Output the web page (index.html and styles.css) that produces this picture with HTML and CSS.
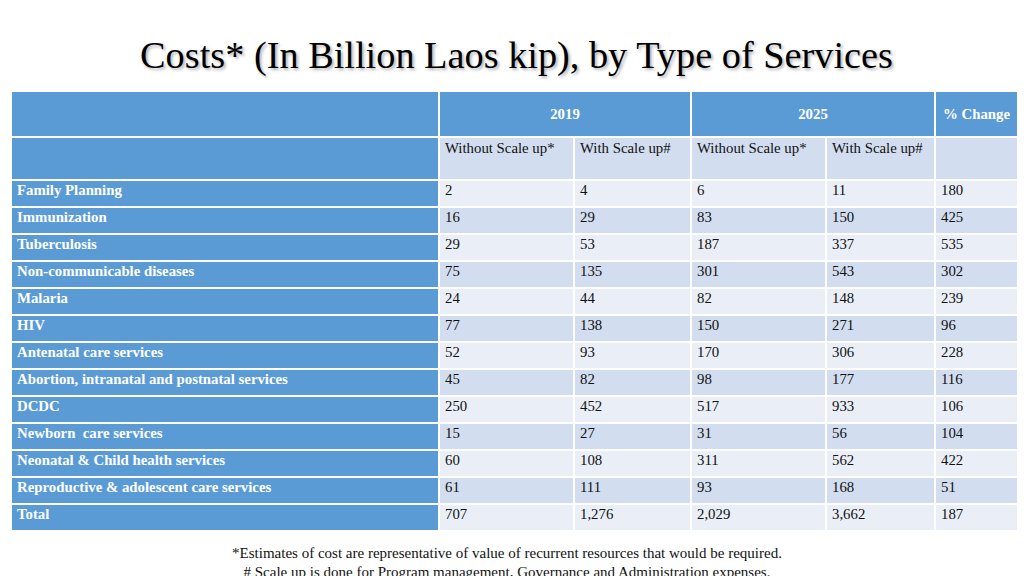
FILE: index.html
```html
<!DOCTYPE html>
<html>
<head>
<meta charset="utf-8">
<link rel="stylesheet" href="styles.css">
</head>
<body>
<div class="slide">
  <h1 class="title">Costs* (In Billion Laos kip), by Type of Services</h1>
  <table class="costs">
    <colgroup>
      <col class="c-label"><col class="c-a"><col class="c-b"><col class="c-c"><col class="c-d"><col class="c-e">
    </colgroup>
    <tr class="head">
      <th></th>
      <th colspan="2">2019</th>
      <th colspan="2">2025</th>
      <th>% Change</th>
    </tr>
    <tr class="sub">
      <th class="lab"></th>
      <td>Without Scale up*</td>
      <td>With Scale up#</td>
      <td>Without Scale up*</td>
      <td>With Scale up#</td>
      <td></td>
    </tr>
    <tr class="odd"><th class="lab">Family Planning</th><td>2</td><td>4</td><td>6</td><td>11</td><td>180</td></tr>
    <tr class="even"><th class="lab">Immunization</th><td>16</td><td>29</td><td>83</td><td>150</td><td>425</td></tr>
    <tr class="odd"><th class="lab">Tuberculosis</th><td>29</td><td>53</td><td>187</td><td>337</td><td>535</td></tr>
    <tr class="even"><th class="lab">Non-communicable diseases</th><td>75</td><td>135</td><td>301</td><td>543</td><td>302</td></tr>
    <tr class="odd"><th class="lab">Malaria</th><td>24</td><td>44</td><td>82</td><td>148</td><td>239</td></tr>
    <tr class="even"><th class="lab">HIV</th><td>77</td><td>138</td><td>150</td><td>271</td><td>96</td></tr>
    <tr class="odd"><th class="lab">Antenatal care services</th><td>52</td><td>93</td><td>170</td><td>306</td><td>228</td></tr>
    <tr class="even"><th class="lab">Abortion, intranatal and postnatal services</th><td>45</td><td>82</td><td>98</td><td>177</td><td>116</td></tr>
    <tr class="odd"><th class="lab">DCDC</th><td>250</td><td>452</td><td>517</td><td>933</td><td>106</td></tr>
    <tr class="even"><th class="lab">Newborn&nbsp; care services</th><td>15</td><td>27</td><td>31</td><td>56</td><td>104</td></tr>
    <tr class="odd"><th class="lab">Neonatal &amp; Child health services</th><td>60</td><td>108</td><td>311</td><td>562</td><td>422</td></tr>
    <tr class="even"><th class="lab">Reproductive &amp; adolescent care services</th><td>61</td><td>111</td><td>93</td><td>168</td><td>51</td></tr>
    <tr class="odd"><th class="lab">Total</th><td>707</td><td>1,276</td><td>2,029</td><td>3,662</td><td>187</td></tr>
  </table>
  <div class="notes">
    <p>*Estimates of cost are representative of value of recurrent resources that would be required.</p>
    <p># Scale up is done for Program management, Governance and Administration expenses.</p>
  </div>
</div>
</body>
</html>
```
FILE: styles.css
```css
html, body {
  margin: 0;
  padding: 0;
  background: #ffffff;
}
.slide {
  width: 1024px;
  height: 576px;
  overflow: hidden;
  font-family: "Times New Roman", "Liberation Serif", Tinos, Times, serif;
  color: #111111;
}
.title {
  margin: 0;
  padding-top: 33px;
  padding-left: 9px;
  height: 90px;
  box-sizing: border-box;
  text-align: center;
  font-weight: normal;
  font-size: 38.3px;
  line-height: 44px;
  color: #000000;
  text-shadow: 2px 2px 3px rgba(0, 0, 0, 0.3);
}
.costs {
  margin-left: 10px;
  margin-top: 0;
  width: 1009px;
  border-collapse: separate;
  border-spacing: 2px;
  table-layout: fixed;
  font-family: "Times New Roman", "Liberation Serif", Tinos, Times, serif;
  font-size: 14.8px;
}
.c-label { width: 426px; }
.c-a { width: 133px; }
.c-b { width: 115px; }
.c-c { width: 133px; }
.c-d { width: 107px; }
.c-e { width: 81px; }
.costs th, .costs td {
  padding: 0 0 0 5px;
  text-align: left;
  vertical-align: top;
  line-height: 17px;
  white-space: nowrap;
}
.head th {
  background: #5b9bd5;
  color: #ffffff;
  font-weight: bold;
  height: 44px;
  text-align: center;
  vertical-align: middle;
  padding: 0;
}
.sub td, .sub th {
  height: 41px;
  padding-top: 2px;
  box-sizing: border-box;
}
.lab {
  background: #5b9bd5;
  color: #ffffff;
  font-weight: bold;
}
.sub td { background: #d2deef; }
.odd td, .even td, .odd th, .even th {
  height: 25px;
  box-sizing: border-box;
  padding-top: 1px;
}
.odd td { background: #eaeff7; }
.even td { background: #d2deef; }
.notes {
  margin-top: 12px;
  text-align: center;
  font-size: 15px;
  line-height: 19px;
  margin-left: -10px;
}
.notes p { margin: 0; }
```
